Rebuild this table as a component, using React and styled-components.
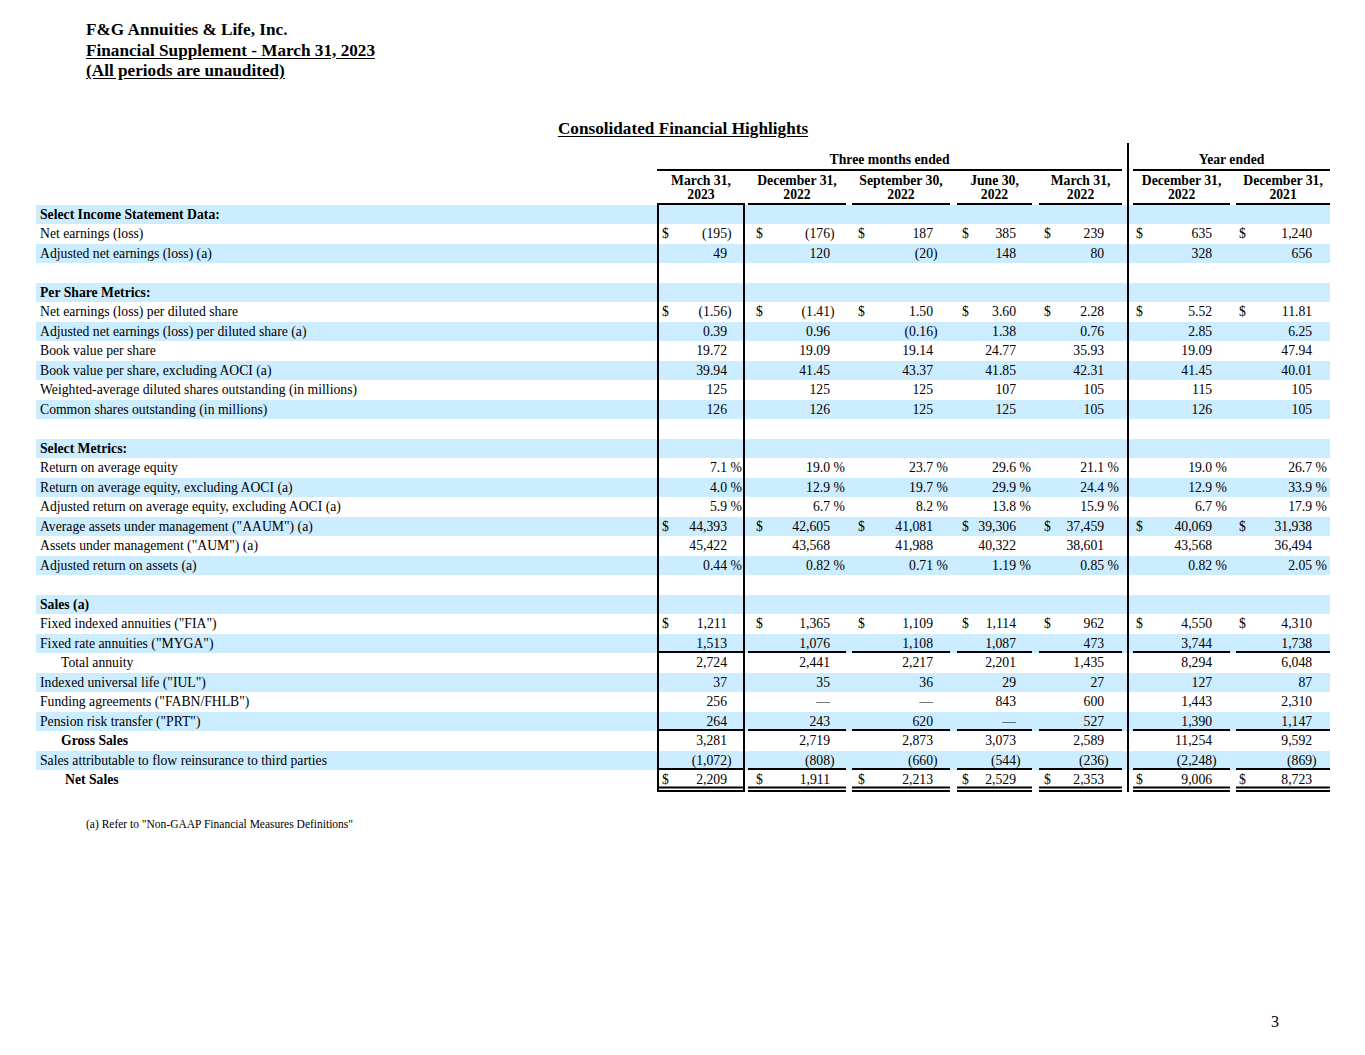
import React from "react";
import styled, { createGlobalStyle } from "styled-components";

const ROW_BLUE = "#ccecff";

const GlobalStyle = createGlobalStyle`
  html, body {
    margin: 0;
    padding: 0;
    background: #fff;
  }
  body {
    font-family: "Liberation Serif", "Times New Roman", serif;
    color: #000;
  }
`;

const Page = styled.div`
  width: 1365px;
  height: 1055px;
  box-sizing: border-box;
  padding-top: 20px;
  display: flex;
  flex-direction: column;
  overflow: hidden;
`;

const TitleBlock = styled.div`
  padding-left: 86px;
  font-weight: bold;
  font-size: 17.2px;
  line-height: 20.5px;
`;

const TitleLine = styled.div`
  text-decoration: ${(p) => (p.underline ? "underline" : "none")};
  text-underline-offset: 2px;
`;

const Section = styled.div`
  margin-left: 36px;
  width: 1294px;
  margin-top: 37px;
`;

const Heading = styled.div`
  text-align: center;
  font-weight: bold;
  font-size: 17.2px;
  line-height: 20px;
  text-decoration: underline;
  text-underline-offset: 2px;
  margin-bottom: 4px;
`;

const Table = styled.table`
  border-collapse: separate;
  border-spacing: 0;
  table-layout: fixed;
  width: 1294px;
  font-size: 13.7px;
`;

const GroupRow = styled.tr`
  height: 28px;
`;

const ColHeadRow = styled.tr`
  height: 34px;
`;

const BodyRow = styled.tr`
  height: ${(p) => (p.tall ? "22px" : "19.5px")};
  background: ${(p) => (p.shaded ? ROW_BLUE : "#fff")};
`;

const GroupHead = styled.th`
  padding: 0 0 4px;
  vertical-align: bottom;
  text-align: center;
  font-weight: bold;
  line-height: 14px;
  box-shadow: inset 0 -2px 0 #000;
`;

const ColHead = styled.th`
  padding: 0 0 3px;
  vertical-align: bottom;
  text-align: center;
  font-weight: bold;
  line-height: 14px;
  white-space: pre;
  box-shadow: inset 0 -2px 0 #000;
`;

const Blank = styled.td`
  padding: 0;
`;

const Gap = styled.td`
  padding: 0;
  background-image: ${(p) =>
    p.divider ? "linear-gradient(#000, #000)" : "none"};
  background-size: 2px 100%;
  background-position: 5px 0;
  background-repeat: no-repeat;
`;

const Label = styled.td`
  padding: 0 0 0 ${(p) => 4 + (p.indent || 0)}px;
  vertical-align: top;
  line-height: 19.5px;
  white-space: nowrap;
  font-weight: ${(p) => (p.bold ? "bold" : "normal")};
`;

const ValueCell = styled.td`
  padding: 0;
  vertical-align: top;
  line-height: 19.5px;
  box-shadow: ${(p) => p.shadow};
`;

const ValueGrid = styled.div`
  display: grid;
  grid-template-columns: auto 1fr ${(p) => p.suffix}px;
  padding-left: ${(p) => p.pad}px;
  white-space: pre;
`;

const Num = styled.span`
  text-align: right;
`;

const Footnote = styled.div`
  margin-top: 25px;
  padding-left: 86px;
  font-size: 11.5px;
  line-height: 14px;
`;

const PageNumber = styled.div`
  margin-top: auto;
  padding: 0 86px 23px 0;
  text-align: right;
  font-size: 16px;
  line-height: 20px;
`;

const periods = [
  { w: 88, pad: 5, suffix: 18, head: "March 31,\n2023" },
  { w: 98, pad: 8, suffix: 16, head: "December 31,\n2022" },
  { w: 98, pad: 6, suffix: 17, head: "September 30,\n2022" },
  { w: 75, pad: 5, suffix: 16, head: "June 30,\n2022" },
  { w: 83, pad: 5, suffix: 18, head: "March 31,\n2022" },
  { w: 97, pad: 3, suffix: 18, head: "December 31,\n2022" },
  { w: 94, pad: 3, suffix: 18, head: "December 31,\n2021" },
];
const gaps = [3, 6, 7, 7, 11, 6];

const rows = [
  { label: "Select Income Statement Data:", section: true },
  { label: "Net earnings (loss)", dollar: true, values: ["(195)", "(176)", "187", "385", "239", "635", "1,240"] },
  { label: "Adjusted net earnings (loss) (a)", values: ["49", "120", "(20)", "148", "80", "328", "656"] },
  { blank: true },
  { label: "Per Share Metrics:", section: true },
  { label: "Net earnings (loss) per diluted share", dollar: true, values: ["(1.56)", "(1.41)", "1.50", "3.60", "2.28", "5.52", "11.81"] },
  { label: "Adjusted net earnings (loss) per diluted share (a)", values: ["0.39", "0.96", "(0.16)", "1.38", "0.76", "2.85", "6.25"] },
  { label: "Book value per share", values: ["19.72", "19.09", "19.14", "24.77", "35.93", "19.09", "47.94"] },
  { label: "Book value per share, excluding AOCI (a)", values: ["39.94", "41.45", "43.37", "41.85", "42.31", "41.45", "40.01"] },
  { label: "Weighted-average diluted shares outstanding (in millions)", values: ["125", "125", "125", "107", "105", "115", "105"] },
  { label: "Common shares outstanding (in millions)", values: ["126", "126", "125", "125", "105", "126", "105"] },
  { blank: true },
  { label: "Select Metrics:", section: true },
  { label: "Return on average equity", pct: true, values: ["7.1", "19.0", "23.7", "29.6", "21.1", "19.0", "26.7"] },
  { label: "Return on average equity, excluding AOCI (a)", pct: true, values: ["4.0", "12.9", "19.7", "29.9", "24.4", "12.9", "33.9"] },
  { label: "Adjusted return on average equity, excluding AOCI (a)", pct: true, values: ["5.9", "6.7", "8.2", "13.8", "15.9", "6.7", "17.9"] },
  { label: "Average assets under management (\"AAUM\") (a)", dollar: true, values: ["44,393", "42,605", "41,081", "39,306", "37,459", "40,069", "31,938"] },
  { label: "Assets under management (\"AUM\") (a)", values: ["45,422", "43,568", "41,988", "40,322", "38,601", "43,568", "36,494"] },
  { label: "Adjusted return on assets (a)", pct: true, values: ["0.44", "0.82", "0.71", "1.19", "0.85", "0.82", "2.05"] },
  { blank: true },
  { label: "Sales (a)", section: true },
  { label: "Fixed indexed annuities (\"FIA\")", dollar: true, values: ["1,211", "1,365", "1,109", "1,114", "962", "4,550", "4,310"] },
  { label: "Fixed rate annuities (\"MYGA\")", rule: "single", values: ["1,513", "1,076", "1,108", "1,087", "473", "3,744", "1,738"] },
  { label: "Total annuity", indent: 21, values: ["2,724", "2,441", "2,217", "2,201", "1,435", "8,294", "6,048"] },
  { label: "Indexed universal life (\"IUL\")", values: ["37", "35", "36", "29", "27", "127", "87"] },
  { label: "Funding agreements (\"FABN/FHLB\")", values: ["256", "—", "—", "843", "600", "1,443", "2,310"] },
  { label: "Pension risk transfer (\"PRT\")", rule: "single", values: ["264", "243", "620", "—", "527", "1,390", "1,147"] },
  { label: "Gross Sales", bold: true, indent: 21, values: ["3,281", "2,719", "2,873", "3,073", "2,589", "11,254", "9,592"] },
  { label: "Sales attributable to flow reinsurance to third parties", rule: "single", values: ["(1,072)", "(808)", "(660)", "(544)", "(236)", "(2,248)", "(869)"] },
  { label: "Net Sales", bold: true, indent: 25, dollar: true, rule: "double", values: ["2,209", "1,911", "2,213", "2,529", "2,353", "9,006", "8,723"] },
];

function splitValue(raw, pct) {
  if (!raw) return { num: "", suf: "" };
  if (raw.startsWith("(")) return { num: raw.slice(0, -1), suf: ")" };
  return { num: raw, suf: pct ? " %" : "" };
}

function cellShadow(boxed, rule, bg) {
  const parts = [];
  if (boxed) parts.push("inset 2px 0 0 #000", "inset -2px 0 0 #000");
  if (rule === "single") parts.push("inset 0 -2px 0 #000");
  if (rule === "double")
    parts.push("inset 0 -2px 0 #000", `inset 0 -3.5px 0 ${bg}`, "inset 0 -5.5px 0 #000");
  return parts.length ? parts.join(", ") : "none";
}

function withGaps(cells, keyBase) {
  const out = [];
  cells.forEach((c, i) => {
    out.push(c);
    if (i < gaps.length) out.push(<Gap key={`${keyBase}-g${i}`} divider={i === 4} />);
  });
  return out;
}

function DataRow({ row, shaded }) {
  const bg = shaded ? ROW_BLUE : "#fff";
  const cells = periods.map((p, i) => {
    const { num, suf } = splitValue(row.values && row.values[i], row.pct);
    return (
      <ValueCell key={i} shadow={cellShadow(i === 0, row.rule, bg)}>
        <ValueGrid pad={p.pad} suffix={p.suffix}>
          <span>{row.dollar ? "$" : ""}</span>
          <Num>{num}</Num>
          <span>{suf}</span>
        </ValueGrid>
      </ValueCell>
    );
  });
  return (
    <BodyRow shaded={shaded} tall={row.rule === "double"}>
      <Label bold={row.section || row.bold} indent={row.indent}>
        {row.label || ""}
      </Label>
      {withGaps(cells, "r")}
    </BodyRow>
  );
}

export default function App() {
  const cols = [];
  periods.forEach((p, i) => {
    cols.push(<col key={`p${i}`} style={{ width: p.w }} />);
    if (i < gaps.length) cols.push(<col key={`g${i}`} style={{ width: gaps[i] }} />);
  });

  return (
    <>
      <GlobalStyle />
      <Page>
        <TitleBlock>
          <TitleLine>F&amp;G Annuities &amp; Life, Inc.</TitleLine>
          <TitleLine underline>Financial Supplement - March 31, 2023</TitleLine>
          <TitleLine underline>(All periods are unaudited)</TitleLine>
        </TitleBlock>

        <Section>
          <Heading>Consolidated Financial Highlights</Heading>
          <Table>
            <colgroup>
              <col style={{ width: 621 }} />
              {cols}
            </colgroup>
            <thead>
              <GroupRow>
                <Blank />
                <GroupHead colSpan={9}>Three months ended</GroupHead>
                <Gap divider />
                <GroupHead colSpan={3}>Year ended</GroupHead>
              </GroupRow>
              <ColHeadRow>
                <Blank />
                {withGaps(
                  periods.map((p, i) => <ColHead key={i}>{p.head}</ColHead>),
                  "h"
                )}
              </ColHeadRow>
            </thead>
            <tbody>
              {rows.map((row, i) => (
                <DataRow key={i} row={row} shaded={i % 2 === 0} />
              ))}
            </tbody>
          </Table>
        </Section>

        <Footnote>(a) Refer to "Non-GAAP Financial Measures Definitions"</Footnote>
        <PageNumber>3</PageNumber>
      </Page>
    </>
  );
}
